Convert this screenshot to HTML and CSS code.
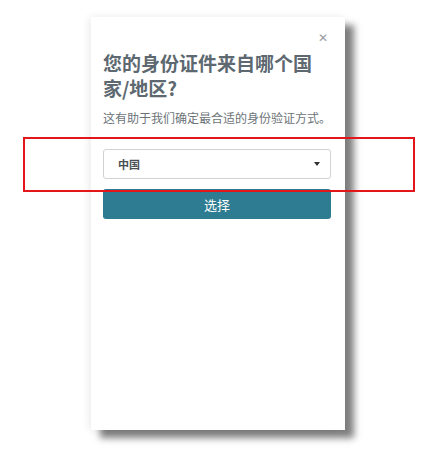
FILE: index.html
```html
<!DOCTYPE html>
<html lang="zh-CN">
<head>
<meta charset="utf-8">
<link rel="stylesheet" href="styles.css">
</head>
<body>
<div class="page">
  <div class="card">
    <div class="close-row"><span class="close">&#x2715;</span></div>
    <h1 class="title">您的身份证件来自哪个国家/地区?</h1>
    <p class="subtitle">这有助于我们确定最合适的身份验证方式。</p>
    <div class="select">
      <span class="select-text">中国</span>
      <span class="caret"></span>
    </div>
    <button class="btn">选择</button>
  </div>
  <div class="highlight"></div>
</div>
</body>
</html>
```
FILE: styles.css
```css
html, body {
  margin: 0;
  padding: 0;
  background: #ffffff;
}
body {
  font-family: "Noto Sans CJK SC", "Noto Sans", sans-serif;
}
.page {
  position: relative;
  width: 437px;
  height: 464px;
  padding: 17px 0 0 91px;
  box-sizing: border-box;
}
.card {
  width: 254px;
  height: 413px;
  box-sizing: border-box;
  background: #ffffff;
  padding: 0 14px 0 12px;
  display: flex;
  flex-direction: column;
  box-shadow: 9px 8px 7px rgba(0, 0, 0, 0.5), -2px 0 8px rgba(0, 0, 0, 0.08);
}
.close-row {
  display: flex;
  justify-content: flex-end;
  height: 33px;
  padding-top: 13px;
  box-sizing: border-box;
  padding-right: 3px;
}
.close {
  font-size: 12px;
  line-height: 14px;
  color: #9a9ea2;
}
.title {
  margin: 0;
  font-size: 19px;
  line-height: 25px;
  font-weight: 700;
  color: #5d6870;
}
.subtitle {
  margin: 10px 0 0 0;
  font-size: 12px;
  line-height: 16px;
  color: #6c7378;
  white-space: nowrap;
}
.select {
  margin-top: 23px;
  height: 30px;
  box-sizing: border-box;
  border: 1px solid #cfd3d6;
  border-radius: 3px;
  display: flex;
  align-items: center;
  justify-content: space-between;
  padding: 0 10px 0 14px;
}
.select-text {
  font-size: 11px;
  font-weight: 700;
  color: #4a4f54;
}
.caret {
  width: 0;
  height: 0;
  border-left: 3px solid transparent;
  border-right: 3px solid transparent;
  border-top: 4px solid #333;
}
.btn {
  margin-top: 10px;
  height: 30px;
  border: none;
  border-radius: 3px;
  background: #2d7c91;
  color: #ffffff;
  font-family: "Noto Sans CJK SC", "Noto Sans", sans-serif;
  font-size: 13px;
  padding: 0;
}
.highlight {
  position: absolute;
  left: 23px;
  top: 137px;
  width: 392px;
  height: 55px;
  box-sizing: border-box;
  border: 2px solid #e3161c;
}
```
